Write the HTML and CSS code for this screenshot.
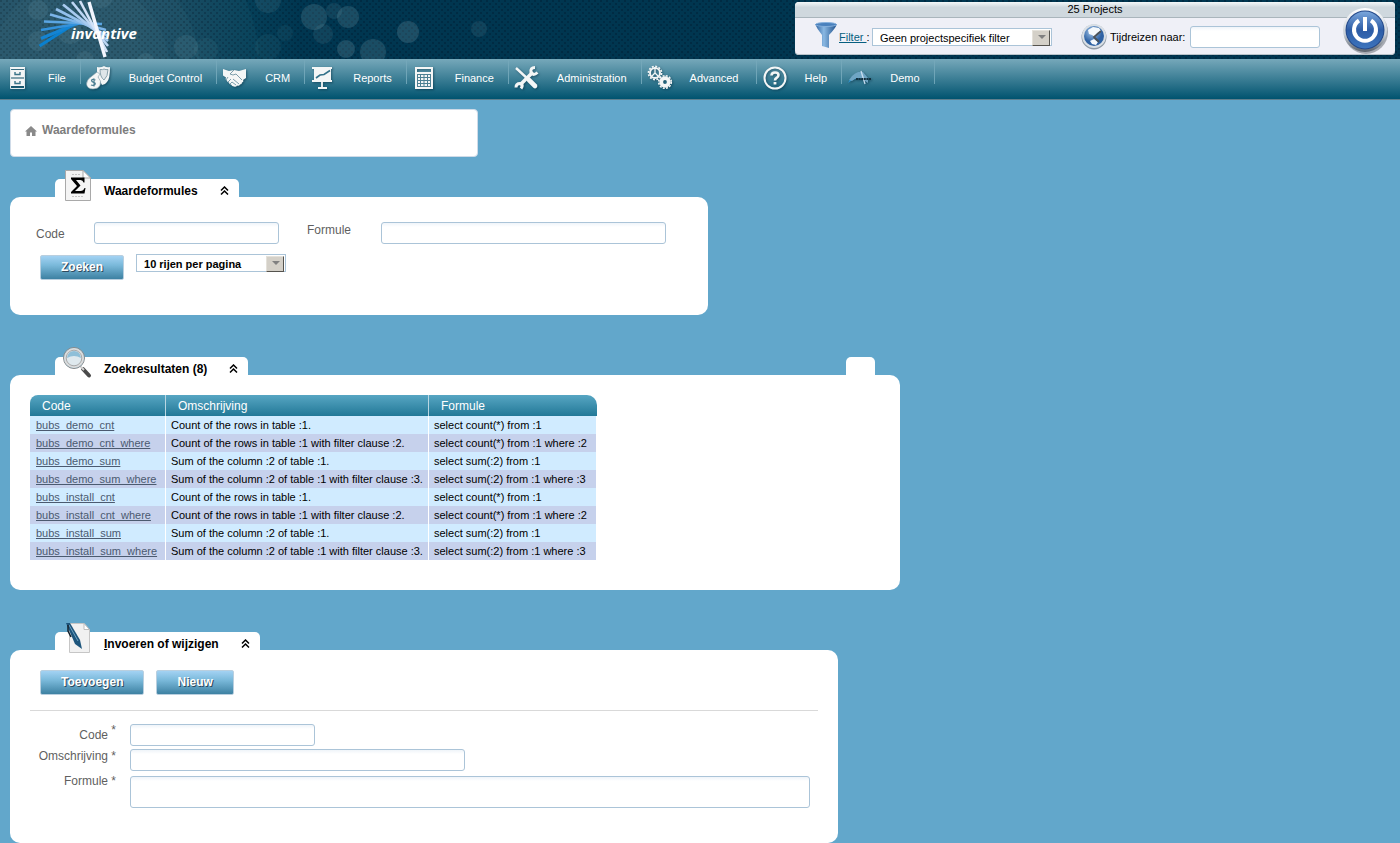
FILE: index.html
```html
<!DOCTYPE html>
<html lang="nl">
<head>
<meta charset="utf-8">
<title>Waardeformules</title>
<link rel="stylesheet" href="styles.css">
</head>
<body>
<header class="banner">
  <svg class="bubbles" width="700" height="59" viewBox="0 0 700 59" fill="#9fc4cf" aria-hidden="true">
    <g fill-opacity=".04">
      <circle cx="80" cy="70" r="90"/><circle cx="80" cy="70" r="120"/><circle cx="80" cy="70" r="180"/>
    </g>
    <g fill-opacity=".1">
      <circle cx="38" cy="10" r="10"/><circle cx="38" cy="41" r="10"/><circle cx="70" cy="32" r="12"/><circle cx="101" cy="-4" r="12"/>
      <circle cx="85" cy="60" r="9"/><circle cx="146" cy="62" r="9"/><circle cx="186" cy="47" r="12"/><circle cx="206" cy="50" r="12" fill-opacity=".06"/>
      <circle cx="268" cy="0" r="13"/><circle cx="285" cy="33" r="8" fill-opacity=".06"/><circle cx="268" cy="47" r="13" fill-opacity=".06"/>
      <circle cx="314" cy="17" r="13" fill-opacity=".16"/><circle cx="334" cy="11" r="8"/><circle cx="348" cy="17" r="11" fill-opacity=".16"/><circle cx="323" cy="34" r="10"/>
      <circle cx="346" cy="49" r="9" fill-opacity=".18"/><circle cx="373" cy="52" r="13" fill-opacity=".16"/><circle cx="408" cy="32" r="11" fill-opacity=".18"/><circle cx="479" cy="29" r="8"/>
    </g>
  </svg>
  <a class="logo" href="#" aria-label="invantive">
    <svg width="110" height="59" viewBox="0 0 110 59" fill="none" stroke-width="2.600">
      <path stroke="#0a80cf" stroke-width="3" d="M11.500 46 46 24"/><path stroke="#1484d3" stroke-width="3" d="M13 38.500 50 23"/>
      <path stroke="#3392dc" d="M13 30 58 22.500"/><path stroke="#5aa5e2" d="M16 21.500 74 24"/>
      <path stroke="#7bb4e8" d="M22 14.500 78 30"/><path stroke="#93c0ec" d="M28 9 80 36"/>
      <path stroke="#a9cbf0" d="M35 4.500 80 41"/><path stroke="#bdd6f4" d="M44 2 80 46"/>
      <path stroke="#d3e2f8" d="M52 1 79 52"/><path stroke="#f2f5fe" stroke-width="3.400" d="M61 2 77 57"/>
    </svg>
    <span class="logo-name">invantive</span>
  </a>
  <section class="project-bar">
    <h2 class="project-count">25 Projects</h2>
    <div class="project-tools">
      <svg class="funnel" width="24" height="26" viewBox="0 0 24 26" aria-hidden="true">
        <defs><linearGradient id="fg"><stop offset="0" stop-color="#2d61a0"/><stop offset=".4" stop-color="#8ab8e2"/><stop offset="1" stop-color="#1e4f8b"/></linearGradient></defs>
        <path d="M0 2Q2 7 7 13V24L14 26V13Q20 7 22 2Z" fill="url(#fg)"/>
        <ellipse cx="11" cy="2.500" rx="10.500" ry="2" fill="#4a81bd" stroke="#86b0dc"/>
      </svg>
      <label class="filter-label" for="filter"><a href="#">Filter </a>:</label>
      <span class="drop"><select id="filter" class="select-filter"><option>Geen projectspecifiek filter</option></select></span>
      <svg class="globe" width="28" height="28" viewBox="0 0 28 28" aria-hidden="true">
        <defs><radialGradient id="gg" cx=".4" cy=".3"><stop offset="0" stop-color="#a7c9ec"/><stop offset="1" stop-color="#2f62a4"/></radialGradient></defs>
        <circle cx="14" cy="15" r="12.500" fill="#8e99a4"/><circle cx="14" cy="14" r="12" fill="#d9dfe5"/><circle cx="14" cy="14" r="10" fill="url(#gg)"/>
        <path fill="#f4f8fc" d="M8 8l5-3 6 1 2 3-4 2-2 4-3-2-3-1zM10 19l4-2 4 3-2 3-4-1z"/>
        <path stroke="#4b5258" stroke-width="1.800" fill="none" d="M21 9 14 15l5 5"/>
      </svg>
      <label class="travel-label" for="travel">Tijdreizen naar:</label>
      <input id="travel" class="field field-travel" type="text">
      <button class="power" type="button" aria-label="Afmelden">
        <svg width="48" height="50" viewBox="0 0 48 50">
          <defs>
            <linearGradient id="pr" x2="0" y2="1"><stop offset="0" stop-color="#fff"/><stop offset=".6" stop-color="#c8cfd6"/><stop offset="1" stop-color="#59616b"/></linearGradient>
            <linearGradient id="pb" x2="0" y2="1"><stop offset="0" stop-color="#7ba7dc"/><stop offset=".5" stop-color="#2d5ca6"/><stop offset="1" stop-color="#3c74bd"/></linearGradient>
          </defs>
          <circle cx="25" cy="26" r="22" fill="#39424c" fill-opacity=".4"/>
          <circle cx="24" cy="24" r="22" fill="url(#pr)"/><circle cx="24" cy="24" r="19.500" fill="#24498a"/><circle cx="24" cy="24" r="18.500" fill="url(#pb)"/>
          <path fill="none" stroke="#fff" stroke-width="4" d="M18 14.500a11 11 0 1 0 12 0M24 11V25"/>
        </svg>
      </button>
    </div>
  </section>
</header>

<nav class="menu">
  <a class="menu-item" href="#"><svg class="menu-icon" viewBox="0 0 32 32"><path fill="#f4f6f6" d="M9 5h15v2H9zM10 8h13v7H10zM10 17h13v7H10z"/><path stroke="#dfe8ea" fill="none" d="M9.500 6v20.500h14V6M9.500 16h14"/><path stroke="#3b7489" stroke-width="1.400" fill="none" d="M14 10v2.500h5V10M14 19v2.500h5V19"/></svg><span class="menu-text">File</span></a>
  <a class="menu-item" href="#"><svg class="menu-icon" viewBox="0 0 32 32"><path fill="#f4f6f6" d="M15 5q4 1 7-1 3 2 6 1 0 12-3 15-2 3-5 3l-5-10z"/><path fill="#dfe6e9" stroke="#8aa3ad" d="M18 7.500q3 .500 4-.500 2 1 4 .500 0 7-4 10.500-4-3-4-10.500z"/><path fill="#f4f6f6" stroke="#7f9ca8" stroke-width=".600" d="M10 14l5-4 3 2-2 3q4 4 2 8.500-2 3.500-7 3.500-6 0-6.500-5 0-4.500 5.500-8z"/><path fill="none" stroke="#4b7d91" stroke-width="1.200" d="M13.500 18q-3-1.500-4 .300 0 1.500 2 2 2.500.700 1.500 2.200-1.500 1.500-4 .500M12 16.500v8"/></svg><span class="menu-text">Budget Control</span></a>
  <a class="menu-item" href="#"><svg class="menu-icon" viewBox="0 0 32 32"><path fill="#f4f6f6" d="M5 7l6 2 5-1 5 1 7-2v9l-3 2q1 2-1 2.500 0 2-2 2-1 2-3 1-1 2-3 1-2 0-3-2-2 0-2-2-2 0-2-2-2-.500-1-3l-3-2z"/><path fill="none" stroke="#6e93a1" stroke-width=".900" d="M16 8l-4 4q3 2 6 0l6 6M15 17l6 5M14 20l4 3M8 18l2-3M10 20l3-3M12 22l2-2"/></svg><span class="menu-text">CRM</span></a>
  <a class="menu-item" href="#"><svg class="menu-icon" viewBox="0 0 32 32"><path fill="none" stroke="#f4f6f6" stroke-width="1.800" d="M6 6h20M6 19h20M16 19v6M12 26h9"/><path fill="#f4f6f6" d="M8 6h17v13H8z"/><path fill="none" stroke="#34728a" stroke-width="1.600" d="M10 16l4-3 4-.500 6-4"/></svg><span class="menu-text">Reports</span></a>
  <a class="menu-item" href="#"><svg class="menu-icon" viewBox="0 0 32 32"><path fill="#f4f6f6" fill-rule="evenodd" d="M7 5h18v22H7zM9 7v3h14V7z"/><path stroke="#4d8093" stroke-width="1" fill="none" d="M9 12.500h14M9 15.500h14M9 18.500h14M9 21.500h14M9 24.500h14M9.500 12v13M12.500 12v13M16 12v13M19.500 12v13M22.500 12v13"/></svg><span class="menu-text">Finance</span></a>
  <a class="menu-item" href="#"><svg class="menu-icon" viewBox="0 0 32 32"><path fill="none" stroke="#f4f6f6" stroke-width="2.400" d="M6 6l13 12"/><path stroke="#f4f6f6" stroke-width="4.600" stroke-linecap="round" d="M19 18l6 6"/><path stroke="#f4f6f6" stroke-width="3.600" d="M10 23 23 10"/><path stroke="#f4f6f6" stroke-width="3" fill="none" d="M25 5.500q-5 0-4 5 2 4 6.500 0M11 26.500q3-4-1-5-4 0-4 4"/></svg><span class="menu-text">Administration</span></a>
  <a class="menu-item menu-item-wide" href="#"><svg class="menu-icon" viewBox="0 0 32 32" fill="none" stroke="#f4f6f6"><circle cx="12" cy="11" r="5" stroke-width="2"/><circle cx="12" cy="11" r="6.600" stroke-width="1.600" stroke-dasharray="2 1.455"/><path stroke-width="1.300" d="M12 5v6l-4 4M12 11l4 4"/><circle cx="22" cy="20" r="3.800" stroke-width="3.800"/><circle cx="22" cy="20" r="6.300" stroke-width="1.600" stroke-dasharray="2 1.300"/></svg><span class="menu-text">Advanced</span></a>
  <a class="menu-item" href="#"><svg class="menu-icon" viewBox="0 0 32 32"><circle cx="17" cy="16" r="10.500" fill="none" stroke="#f4f6f6" stroke-width="2"/><path fill="none" stroke="#f4f6f6" stroke-width="2.600" d="M13.500 13.500q0-3 3.500-3t3.500 2.500q0 2-2 3-1.500.800-1.500 2.500"/><path fill="#f4f6f6" d="M15.600 20h2.800v2.500h-2.800z"/></svg><span class="menu-text">Help</span></a>
  <a class="menu-item" href="#"><svg class="menu-icon" viewBox="0 0 32 32"><path fill="#2a94d2" d="M5 21q4-8 10-8l3 3q-7 0-13 5z"/><path fill="#6fa5c4" d="M9 14q3-3 6-4l5 0 5 6 0 5-6-4q-5-3-10 2l-3-1z"/><path stroke="#c8def0" stroke-width="1.300" d="M18 9l4 13"/><path stroke="#12303f" stroke-width="1.800" stroke-dasharray="2 .600" d="M13 17h15"/></svg><span class="menu-text">Demo</span></a>
</nav>

<main class="content">
  <div class="crumbs">
    <svg width="12" height="12" viewBox="0 0 12 12" aria-hidden="true"><path fill="#8a8a8a" d="M6 1l6 5.500h-1.500V11H7V7.500H5V11H1.500V6.500H0z"/></svg>
    <span>Waardeformules</span>
  </div>

  <section class="panel panel-search">
    <div class="tabs">
      <div class="tab">
        <svg class="tab-icon" viewBox="0 0 30 34"><path fill="#f4f4f4" stroke="#a9a9a9" d="M2.500 2.500H20l7.500 7.500V32.500h-25z"/><path fill="#fff" stroke="#a9a9a9" d="M20 2.500V10h7.500z"/><path stroke="#c4c4c4" stroke-dasharray="2 1" d="M9 6.500h9M9 28.500h11"/><path fill="#000" d="M8 9.500h13.500v5h-1q-.500-2.500-3-2.500h-4.500l4.500 5.500-5.500 5.500h5.500q3 0 4-3h1l-1 5.500H8v-1.500l6-6L8 11z"/></svg>
        <h2 class="tab-title">Waardeformules</h2>
        <button class="fold" type="button" aria-label="Inklappen"><svg width="9" height="9" viewBox="0 0 9 9"><path fill="none" stroke="#000" stroke-width="1.500" d="M1 4.500 4.500 1 8 4.500M1 8.500 4.500 5 8 8.500"/></svg></button>
      </div>
    </div>
    <form class="panel-body search-form">
      <div class="search-row">
        <label class="label label-low" for="s-code">Code</label>
        <input id="s-code" class="field field-code" type="text">
        <label class="label label-next" for="s-formule">Formule</label>
        <input id="s-formule" class="field field-formula" type="text">
      </div>
      <div class="search-actions">
        <button class="button" type="button">Zoeken</button>
        <span class="drop"><select class="select-rows" aria-label="Rijen per pagina"><option>10 rijen per pagina</option></select></span>
      </div>
    </form>
  </section>

  <section class="panel panel-results">
    <div class="tabs">
      <div class="tab">
        <svg class="tab-icon" viewBox="0 0 30 34"><path stroke="#4a4a4a" stroke-width="4" stroke-linecap="round" d="M20 23l6 6.500"/><path stroke="#d2d2d2" stroke-width="2" d="M16 19l5 5"/><circle cx="11" cy="12" r="10.500" fill="#8fc3dd" stroke="#8a8a8a"/><circle cx="11" cy="12" r="9" fill="#dfe9ee" stroke="#dcdcdc" stroke-width="2"/><path fill="#8fbfd8" d="M4 12q7-4 14 0-1-7-7-7t-7 7z"/><circle cx="11" cy="12" r="7.800" fill="none" stroke="#9b9b9b" stroke-width=".800"/></svg>
        <h2 class="tab-title">Zoekresultaten (8)</h2>
        <button class="fold" type="button" aria-label="Inklappen"><svg width="9" height="9" viewBox="0 0 9 9"><path fill="none" stroke="#000" stroke-width="1.500" d="M1 4.500 4.500 1 8 4.500M1 8.500 4.500 5 8 8.500"/></svg></button>
      </div>
      <div class="tab tab-empty"></div>
    </div>
    <div class="panel-body results-body">
      <table class="results">
        <thead><tr><th class="col-code">Code</th><th class="col-desc">Omschrijving</th><th class="col-formula">Formule</th></tr></thead>
        <tbody>
          <tr><td><a href="#">bubs_demo_cnt</a></td><td>Count of the rows in table :1.</td><td>select count(*) from :1</td></tr>
          <tr><td><a href="#">bubs_demo_cnt_where</a></td><td>Count of the rows in table :1 with filter clause :2.</td><td>select count(*) from :1 where :2</td></tr>
          <tr><td><a href="#">bubs_demo_sum</a></td><td>Sum of the column :2 of table :1.</td><td>select sum(:2) from :1</td></tr>
          <tr><td><a href="#">bubs_demo_sum_where</a></td><td>Sum of the column :2 of table :1 with filter clause :3.</td><td>select sum(:2) from :1 where :3</td></tr>
          <tr><td><a href="#">bubs_install_cnt</a></td><td>Count of the rows in table :1.</td><td>select count(*) from :1</td></tr>
          <tr><td><a href="#">bubs_install_cnt_where</a></td><td>Count of the rows in table :1 with filter clause :2.</td><td>select count(*) from :1 where :2</td></tr>
          <tr><td><a href="#">bubs_install_sum</a></td><td>Sum of the column :2 of table :1.</td><td>select sum(:2) from :1</td></tr>
          <tr><td><a href="#">bubs_install_sum_where</a></td><td>Sum of the column :2 of table :1 with filter clause :3.</td><td>select sum(:2) from :1 where :3</td></tr>
        </tbody>
      </table>
    </div>
  </section>

  <section class="panel panel-edit">
    <div class="tabs">
      <div class="tab">
        <svg class="tab-icon" viewBox="0 0 30 34"><path fill="#f1f1f1" stroke="#c6c6c6" d="M6.500 2.500H21l5.500 6V31.500h-20z"/><path fill="#fff" stroke="#bdbdbd" d="M21 2.500V8.500h5.500z"/><path fill="#1d557c" d="M3 2l4 0 10 17 2 9-7-5z"/><path stroke="#6fa3c2" d="M6 4l9 16"/><path stroke="#16222c" stroke-width="1.500" fill="none" d="M5 4l0 6 3 6"/></svg>
        <h2 class="tab-title"><u>I</u>nvoeren of wijzigen</h2>
        <button class="fold" type="button" aria-label="Inklappen"><svg width="9" height="9" viewBox="0 0 9 9"><path fill="none" stroke="#000" stroke-width="1.500" d="M1 4.500 4.500 1 8 4.500M1 8.500 4.500 5 8 8.500"/></svg></button>
      </div>
    </div>
    <form class="panel-body edit-form">
      <div class="edit-actions">
        <button class="button" type="button">Toevoegen</button>
        <button class="button" type="button">Nieuw</button>
      </div>
      <hr class="rule">
      <div class="edit-fields">
        <label class="label label-low" for="e-code">Code <sup class="star">*</sup></label>
        <input id="e-code" class="field field-code" type="text">
        <label class="label" for="e-desc">Omschrijving *</label>
        <input id="e-desc" class="field field-desc" type="text">
        <label class="label" for="e-formule">Formule *</label>
        <textarea id="e-formule" class="field field-area"></textarea>
      </div>
    </form>
  </section>
</main>
</body>
</html>
```
FILE: styles.css
```css
* {
  box-sizing: border-box;
}

body {
  margin: 0;
  background: #62a7cb;
  color: #000;
  font: 11px/18px "Liberation Sans", Arial, sans-serif;
}

h2 {
  margin: 0;
}

button,
input,
select,
textarea {
  margin: 0;
  font: inherit;
}

/* Banner */
.banner {
  position: relative;
  display: flex;
  justify-content: space-between;
  height: 59px;
  padding: 2px 5px 0 28px;
  background:
    radial-gradient(circle at 1px 1px, rgba(0, 12, 28, 0.25) 1px, transparent 1px) 0 0 / 6px 6px,
    radial-gradient(circle at 4px 4px, rgba(0, 12, 28, 0.25) 1px, transparent 1px) 0 0 / 6px 6px,
    linear-gradient(90deg, #1f4d63 0, #1f4d63 130px, #053f58 250px, #003650 300px);
}

.bubbles {
  position: absolute;
  top: 0;
  left: 0;
}

.logo {
  position: relative;
  width: 110px;
  margin-top: -2px;
  color: #fff;
  text-decoration: none;
}

.logo-name {
  position: absolute;
  top: 24px;
  left: 43px;
  font: italic bold 15px/18px "Open Sans", sans-serif;
}

.project-bar {
  position: relative;
  width: 600px;
  height: 53px;
  border-radius: 4px;
  background: #eff0f7;
  box-shadow: inset 0 -1px 0 #b9c3ca;
}

.project-count {
  height: 16px;
  border-bottom: 1px solid #a9b5bc;
  border-radius: 4px 4px 0 0;
  background: linear-gradient(#f4f8f9, #cfd8de 35%);
  font-size: 11px;
  font-weight: normal;
  line-height: 15px;
  text-align: center;
}

.project-tools {
  display: flex;
  align-items: center;
  height: 37px;
  padding: 1px 0 0 20px;
}

.funnel {
  margin-bottom: 5px;
}

.filter-label {
  width: 33px;
  white-space: nowrap;
}

.filter-label a {
  color: #075f80;
  white-space: pre;
}

.globe {
  margin: 0 2px 2px 28px;
}

.travel-label {
  width: 80px;
  white-space: nowrap;
}

.power {
  position: absolute;
  top: 4px;
  right: 6px;
  height: 50px;
  padding: 0;
  border: 0;
  background: none;
  cursor: pointer;
}

/* Form controls */
.field {
  height: 22px;
  padding: 2px 5px;
  border: 1px solid #abc4d8;
  border-radius: 3px;
  background: linear-gradient(#eff4f9, #fff 4px);
}

.field-travel {
  width: 130px;
}

.field-code {
  width: 185px;
}

.field-formula {
  width: 285px;
}

.field-desc {
  width: 335px;
}

.drop {
  position: relative;
  display: block;
}

.drop::before {
  content: "";
  position: absolute;
  top: 2px;
  right: 2px;
  width: 16px;
  height: 14px;
  border: 1px solid;
  border-color: #e4e1da #55534e #55534e #e4e1da;
  background: #d4d0c8;
  pointer-events: none;
}

.drop::after {
  content: "";
  position: absolute;
  top: 7px;
  right: 6px;
  border: 4px solid transparent;
  border-top-color: #808080;
  border-bottom: 0;
  pointer-events: none;
}

.drop select {
  display: block;
  height: 18px;
  padding: 0 20px 0 7px;
  border: 1px solid #abc4d8;
  border-radius: 0;
  background: #fff;
  color: #000;
  appearance: none;
}

.select-filter {
  width: 180px;
}

.select-rows {
  width: 150px;
  font-weight: bold;
}

.button {
  height: 25px;
  padding: 0 20px 1px;
  border: 1px solid #b9cfdf;
  border-radius: 2px;
  background: linear-gradient(#a3d2f3, #7ab9da 40%, #3d81a2);
  color: #fff;
  font-size: 12px;
  font-weight: bold;
  text-shadow: 1px 1px 0 #2f4a5c;
  cursor: pointer;
}

.label {
  color: #5f5f5f;
  font-size: 12px;
  line-height: 16px;
}

.label-low {
  padding-top: 4px;
}

/* Menu */
.menu {
  display: flex;
  height: 41px;
  border-bottom: 1px solid #5f7f8d;
  background: linear-gradient(#76a8ba, #00536f);
}

.menu-item {
  display: flex;
  align-items: center;
  height: 38px;
  padding-right: 15px;
  background: linear-gradient(#76a8ba, #6ba3b6) right top / 1px 25px no-repeat;
  color: #fff;
  text-decoration: none;
}

.menu-item-wide {
  min-width: 115px;
}

.menu-icon {
  width: 32px;
  height: 32px;
  margin: 0 15px 0 1px;
  filter: drop-shadow(1px 1px 1px rgba(0, 40, 60, 0.5));
}

/* Content */
.content {
  padding: 9px 10px 0;
}

.crumbs {
  display: flex;
  gap: 5px;
  align-items: flex-start;
  max-width: 468px;
  height: 48px;
  padding: 12px 14px;
  border: 1px solid #cfdbe8;
  border-radius: 4px;
  background: #fff;
  color: #7d7d7d;
  font-size: 12px;
  font-weight: bold;
  line-height: 16px;
}

.crumbs svg {
  margin-top: 3px;
}

.panel {
  margin-top: 42px;
}

.panel-search {
  max-width: 698px;
  margin-top: 22px;
}

.panel-results {
  max-width: 890px;
}

.panel-edit {
  max-width: 828px;
}

.tabs {
  display: flex;
  justify-content: space-between;
  padding: 0 25px 0 45px;
}

.tab {
  position: relative;
  display: flex;
  gap: 22px;
  align-items: flex-start;
  height: 18px;
  padding: 0 10px 0 49px;
  border-radius: 5px 5px 0 0;
  background: #fff;
}

.tab-empty {
  width: 29px;
  padding: 0;
}

.tab-icon {
  position: absolute;
  top: -11px;
  left: 8px;
  width: 30px;
  height: 34px;
}

.tab-title {
  font-size: 12px;
  line-height: 25px;
  white-space: nowrap;
}

.fold {
  display: flex;
  padding: 7px 0 0;
  border: 0;
  background: none;
  cursor: pointer;
}

.panel-body {
  border-radius: 10px;
  background: #fff;
}

.search-form {
  padding: 25px 26px 35px;
}

.search-row {
  display: flex;
  align-items: flex-start;
}

.search-row .label {
  width: 58px;
}

.search-row .label-next {
  width: 74px;
  margin-left: 28px;
}

.search-actions {
  display: flex;
  gap: 12px;
  align-items: flex-start;
  padding: 11px 4px 0;
}

.search-actions .drop {
  margin-top: -1px;
}

.results-body {
  padding: 20px 20px 30px;
}

.results {
  width: 567px;
  border-spacing: 0;
}

.results th {
  height: 21px;
  padding: 0 12px;
  border-right: 1px solid #b9d6e2;
  background: linear-gradient(#57a6c3, #227897);
  color: #fff;
  font-size: 12px;
  font-weight: normal;
  text-align: left;
}

.results th:first-child {
  border-top-left-radius: 8px;
}

.results th:last-child {
  border-right: 0;
  border-top-right-radius: 10px;
}

.col-code {
  width: 136px;
}

.col-desc {
  width: 263px;
}

.col-formula {
  width: 168px;
}

.results td {
  height: 18px;
  padding: 0 6px;
  border-right: 1px solid #fff;
  background: #d0ebff;
  white-space: nowrap;
}

.results td + td {
  padding: 0 5px;
}

.results tr:nth-child(even) td {
  background: #c6d1ec;
}

.results a {
  color: #4b5a70;
  text-decoration-skip-ink: none;
}

.edit-form {
  padding: 20px 20px 35px;
}

.edit-actions {
  display: flex;
  gap: 12px;
  padding-left: 10px;
}

.rule {
  height: 1px;
  margin: 15px 0 13px;
  border: 0;
  background: #d9d9d9;
}

.edit-fields {
  display: grid;
  grid-template-columns: 86px 1fr;
  column-gap: 14px;
  row-gap: 3px;
}

.edit-fields .label {
  line-height: 14px;
  text-align: right;
  white-space: nowrap;
}

.field-area {
  width: 680px;
  max-width: 100%;
  height: 32px;
  margin-top: 2px;
  resize: none;
}

.star {
  font-size: 12px;
  line-height: 0;
}
```
